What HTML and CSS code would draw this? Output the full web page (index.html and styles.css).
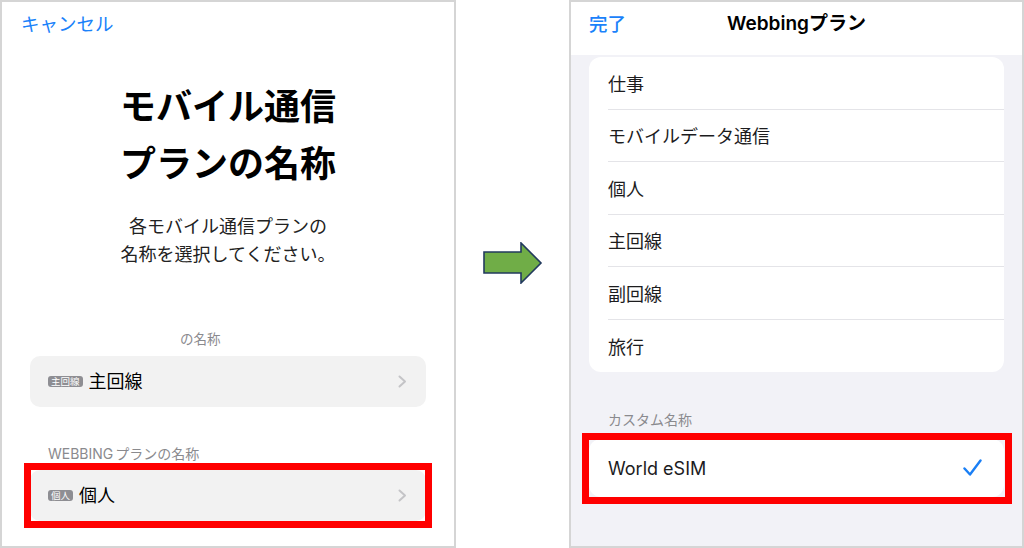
FILE: index.html
```html
<!DOCTYPE html>
<html lang="ja">
<head>
  <meta charset="UTF-8" />
  <meta name="viewport" content="width=device-width, initial-scale=1.0"/>
  <title>モバイル通信プランの名称</title>
  <link rel="stylesheet" href="styles.css">
</head>
<body>
  <div class="page">
    <!-- before -->
    <div class="panel panel-setup">
      <div class="nav-link">キャンセル</div>
      <h1 class="setup-title">モバイル通信<br>プランの名称</h1>
      <p class="setup-text">各モバイル通信プランの<br>名称を選択してください。</p>

      <div class="section-label label-plain">の名称</div>
      <div class="pick-row">
        <span class="chip">主回線</span>
        <span class="pick-name">主回線</span>
        <svg class="chevron" width="9" height="13" viewBox="0 0 9 13"><polyline points="1.5,1.5 7,6.5 1.5,11.5" fill="none" stroke="#c4c4c7" stroke-width="2" stroke-linecap="round" stroke-linejoin="round"/></svg>
      </div>

      <div class="section-label label-webbing">WEBBING プランの名称</div>
      <div class="pick-row marked">
        <span class="chip">個人</span>
        <span class="pick-name">個人</span>
        <svg class="chevron" width="9" height="13" viewBox="0 0 9 13"><polyline points="1.5,1.5 7,6.5 1.5,11.5" fill="none" stroke="#c4c4c7" stroke-width="2" stroke-linecap="round" stroke-linejoin="round"/></svg>
      </div>
    </div>

    <div class="between">
      <svg width="60" height="42" viewBox="0 0 60 42">
        <polygon points="1,10 38,10 38,1 58,21 38,41 38,31 1,31" fill="#70ad47" stroke="#223a5e" stroke-width="1.6" stroke-linejoin="miter"/>
      </svg>
    </div>

    <!-- after -->
    <div class="panel panel-list">
      <div class="list-header">
        <span class="nav-link done">完了</span>
        <span class="header-title">Webbingプラン</span>
      </div>

      <div class="card">
        <div class="card-row">仕事</div>
        <div class="card-row">モバイルデータ通信</div>
        <div class="card-row">個人</div>
        <div class="card-row">主回線</div>
        <div class="card-row">副回線</div>
        <div class="card-row">旅行</div>
      </div>

      <div class="section-label label-custom">カスタム名称</div>
      <div class="custom-row marked">
        <span class="custom-name">World eSIM</span>
        <svg class="check" width="19" height="18" viewBox="0 0 19 18"><polyline points="1.5,9.5 7,15.5 17.5,1.5" fill="none" stroke="#1a7ff5" stroke-width="2.4" stroke-linecap="round" stroke-linejoin="round"/></svg>
      </div>
    </div>
  </div>
</body>
</html>
```

FILE: styles.css
```css
* {
  box-sizing: border-box;
}

body {
  margin: 0;
  background: #fff;
  font-family: Inter, "Noto Sans CJK JP", sans-serif;
  color: #1c1c1e;
}

.page {
  display: flex;
  width: 1024px;
  height: 548px;
}

.panel {
  height: 548px;
  border: 2px solid #d5d5d5;
}

/* left screen */

.panel-setup {
  width: 456px;
  background: #fff;
}

.nav-link {
  color: #1a82fa;
  font-size: 18.5px;
  line-height: 24px;
}

.panel-setup .nav-link {
  padding: 10px 0 0 19px;
}

.setup-title {
  margin: 43px 0 0;
  text-align: center;
  font-size: 36px;
  font-weight: 700;
  line-height: 57px;
  color: #000;
}

.setup-text {
  margin: 20px 0 0;
  text-align: center;
  font-size: 18px;
  line-height: 28px;
  color: #222;
}

.section-label {
  font-size: 13.5px;
  line-height: 20px;
  color: #8a8a8e;
}

.label-plain {
  margin-top: 60px;
  padding-left: 178px;
}

.label-webbing {
  margin-top: 37px;
  padding-left: 46px;
  font-size: 14px;
  word-spacing: -2px;
}

.pick-row {
  position: relative;
  display: flex;
  align-items: center;
  height: 51px;
  margin: 7px 28px 0;
  padding: 0 19px 0 18px;
  background: #f2f2f2;
  border-radius: 10px;
}

.label-webbing + .pick-row {
  margin-top: 6px;
}

.chip {
  display: inline-block;
  padding: 0 3px;
  height: 11px;
  line-height: 11px;
  font-size: 9.5px;
  color: #fff;
  background: #8e8e93;
  border-radius: 3px;
}

.pick-name {
  margin-left: 6px;
  font-size: 18px;
  line-height: 24px;
  color: #000;
}

.chevron {
  margin-left: auto;
}

.marked::after {
  content: "";
  position: absolute;
  top: -7px;
  right: -6px;
  bottom: -7px;
  left: -6px;
  border: 7px solid #ff0000;
}

/* arrow */

.between {
  width: 113px;
  display: flex;
  justify-content: center;
  align-items: flex-start;
  padding-top: 242px;
}

/* right screen */

.panel-list {
  width: 455px;
  background: #f2f2f7;
}

.list-header {
  position: relative;
  display: flex;
  align-items: flex-start;
  height: 53px;
  padding: 10px 0 0 18px;
  background: #fff;
}

.done {
  font-weight: 500;
}

.header-title {
  position: absolute;
  left: 0;
  right: 0;
  top: 10px;
  text-align: center;
  font-size: 19px;
  font-weight: 600;
  line-height: 24px;
  color: #000;
  pointer-events: none;
}

.card {
  margin: 2px 18px 0;
  background: #fff;
  border-radius: 12px;
  overflow: hidden;
}

.card-row {
  display: flex;
  align-items: center;
  height: 52.5px;
  margin-left: 19px;
  font-size: 18px;
  color: #1c1c1e;
  border-bottom: 1px solid #e4e4e8;
}

.card-row:last-child {
  border-bottom: none;
}

.label-custom {
  margin-top: 38px;
  padding-left: 37px;
  font-size: 14px;
}

.custom-row {
  position: relative;
  display: flex;
  align-items: center;
  height: 58px;
  margin: 9px 18px 0;
  padding: 0 22px 0 19px;
  background: #fff;
  border-radius: 12px;
}

.custom-row.marked::after {
  top: -6px;
  right: -8px;
  bottom: -7px;
  left: -7px;
}

.custom-name {
  font-size: 18px;
  color: #1c1c1e;
}

.check {
  margin-left: auto;
}
```
